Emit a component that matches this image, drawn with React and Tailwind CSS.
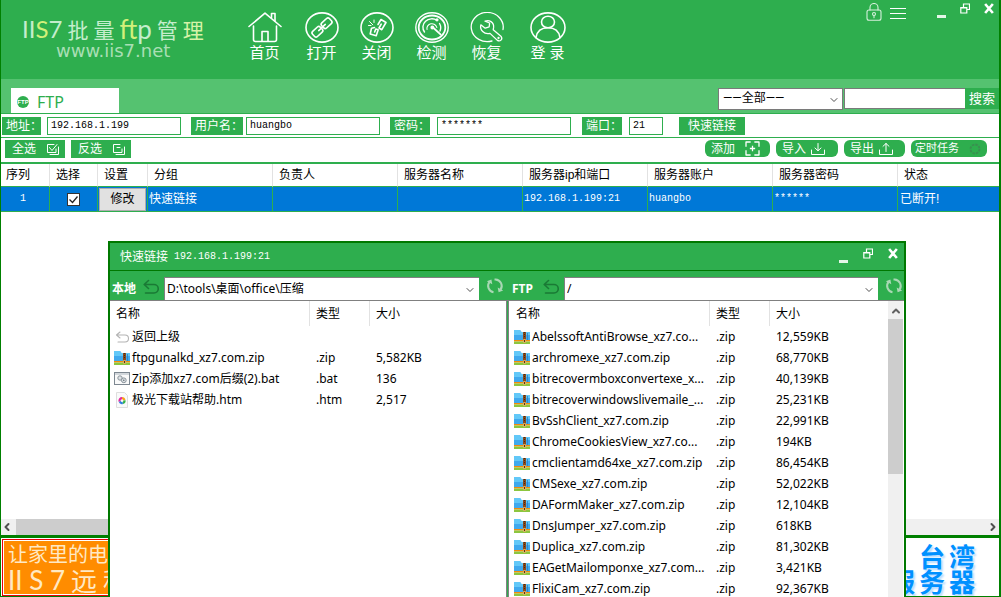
import React from "react";
import { ChevronDown, ChevronLeft, ChevronRight, ChevronUp } from "lucide-react";

const columns = [
  { label: "序列", width: 49 },
  { label: "选择", width: 48 },
  { label: "设置", width: 50 },
  { label: "分组", width: 125 },
  { label: "负责人", width: 125 },
  { label: "服务器名称", width: 125 },
  { label: "服务器ip和端口", width: 125 },
  { label: "服务器账户", width: 125 },
  { label: "服务器密码", width: 125 },
  { label: "状态" },
];

const localFiles = [
  { icon: "back", name: "返回上级", type: "", size: "" },
  { icon: "zip", name: "ftpgunalkd_xz7.com.zip", type: ".zip", size: "5,582KB" },
  { icon: "bat", name: "Zip添加xz7.com后缀(2).bat", type: ".bat", size: "136" },
  { icon: "htm", name: "极光下载站帮助.htm", type: ".htm", size: "2,517" },
];

const remoteFiles = [
  ["AbelssoftAntiBrowse_xz7.co...", "12,559KB"],
  ["archromexe_xz7.com.zip", "68,770KB"],
  ["bitrecovermboxconvertexe_x...", "40,139KB"],
  ["bitrecoverwindowslivemaile_...", "25,231KB"],
  ["BvSshClient_xz7.com.zip", "22,991KB"],
  ["ChromeCookiesView_xz7.co...", "194KB"],
  ["cmclientamd64xe_xz7.com.zip", "86,454KB"],
  ["CMSexe_xz7.com.zip", "52,022KB"],
  ["DAFormMaker_xz7.com.zip", "12,104KB"],
  ["DnsJumper_xz7.com.zip", "618KB"],
  ["Duplica_xz7.com.zip", "81,302KB"],
  ["EAGetMailomponxe_xz7.com...", "3,421KB"],
  ["FlixiCam_xz7.com.zip", "92,367KB"],
].map(([name, size]) => ({ icon: "zip", name, type: ".zip", size }));

function Line({ className = "", width = 34, height = 31, strokeWidth = 1.6, children }) {
  return (
    <svg
      className={`shrink-0 ${className}`}
      width={width}
      height={height}
      viewBox={`0 0 ${width} ${height}`}
      fill="none"
      stroke="currentColor"
      strokeWidth={strokeWidth}
      strokeLinecap="round"
      strokeLinejoin="round"
      aria-hidden="true"
    >
      {children}
    </svg>
  );
}

const HomeIcon = () => (
  <Line>
    <path d="M1 14.5 17 1.2 33 14.5" />
    <path d="M5.5 14v13.5a2 2 0 0 0 2 2h19a2 2 0 0 0 2-2V14M14 29V19.5h6V29M23.5 5.5V1.5h3.5V9" />
  </Line>
);

const LinkIcon = () => (
  <Line>
    <ellipse cx="17" cy="15.5" rx="16" ry="14.6" />
    <g transform="rotate(-43 17 15.5)">
      <rect x="5.5" y="12" width="10.5" height="7" rx="2" />
      <rect x="18" y="12" width="10.5" height="7" rx="2" />
      <path d="M12.5 15.5h9" />
    </g>
  </Line>
);

const UnlinkIcon = () => (
  <Line>
    <ellipse cx="17" cy="15.5" rx="16" ry="14.6" />
    <path d="m18 12.5 3-5 5 3-4.2 7.2-2.8-1.7 2.2-3.8" />
    <path d="m14.5 15.5-3 .8-1.3 5.7 6 1.8 2-6-2.4-.8-1.2 3" />
    <path d="M12.8 12.8 9.5 9.5M14 10.5V8M11 13.5H8.5" strokeWidth="1" />
  </Line>
);

const GaugeIcon = () => (
  <Line strokeWidth="1.4">
    <ellipse cx="17" cy="15.5" rx="16.2" ry="14.7" />
    <ellipse cx="17" cy="15.5" rx="13.3" ry="12" strokeWidth="1.8" />
    <path d="M9.5 20A9 8.4 0 0 1 22 8.3M24.5 11.5a9 8.4 0 0 1 .5 7.5" />
    <path d="M12 17.5a5 4.8 0 0 1 9.8-2" strokeWidth="1.1" />
    <path d="m18 15.5 7.5 6.8" strokeWidth="1.8" />
    <circle cx="17.3" cy="15.5" r="1.2" fill="currentColor" />
    <circle cx="22" cy="7.8" r="0.9" fill="currentColor" />
  </Line>
);

const WrenchIcon = () => (
  <Line strokeWidth="1.3">
    <path d="M22 29A16 14.6 0 1 1 33 17.5" />
    <path d="m10.8 12.8 4.4 3.4 4-1.4.4-3.8-4.6-1.8c4-1.8 9.2.8 8.6 6.2l-.4 2.4 8 6.8c1.8 2.8-1.2 5.4-3.8 3.8l-7.4-7c-6 1.4-10.4-3.4-9.2-8.6Z" />
    <circle cx="28.5" cy="26" r="0.5" />
  </Line>
);

const UserIcon = () => (
  <Line width={36}>
    <ellipse cx="18" cy="15.5" rx="17" ry="14.6" />
    <ellipse cx="18" cy="10" rx="6.5" ry="5.8" />
    <path d="M6 25.5c1-6 5.5-9.7 12-9.7s11 3.7 12 9.7" />
  </Line>
);

const nav = [
  { label: "首页", icon: <HomeIcon />, width: "w-[59px]" },
  { label: "打开", icon: <LinkIcon />, width: "w-[55px]" },
  { label: "关闭", icon: <UnlinkIcon />, width: "w-[55px]" },
  { label: "检测", icon: <GaugeIcon />, width: "w-[55px]" },
  { label: "恢复", icon: <WrenchIcon />, width: "w-[55px]" },
  { label: "登 录", icon: <UserIcon />, width: "w-[67px]" },
];

function UndoIcon({ className }) {
  return (
    <Line width={16} height={16} className={className}>
      <path d="M5.5 1.5 1.2 5.5l4.3 4M1.5 5.5H11a4 4 0 0 1 0 8.5H2.5" />
    </Line>
  );
}

// The small version used inside a file row
function RowUndoIcon() {
  return (
    <Line width={16} height={16} strokeWidth={1.1} className="text-[#b4b4b4]">
      <path d="M6 3 2.5 6 6 9M3 6h8a3.5 3.5 0 0 1 0 7H4" />
    </Line>
  );
}

function RefreshIcon() {
  return (
    <Line width={18} height={18} className="text-[#a9d8b4]" strokeWidth={2}>
      <path d="M7.5 15.3A6.6 6.6 0 0 1 3.5 4.8M8.5 2.4h1A6.6 6.6 0 0 1 14.5 12.8" strokeLinecap="butt" />
      <path d="M.8 4.2 5.4 2.6l.9 4.6zM17.2 13.6l-4.6 1.6-.9-4.6z" fill="currentColor" stroke="none" />
    </Line>
  );
}

function FileIcon({ kind }) {
  if (kind === "back") return <RowUndoIcon />;
  if (kind === "bat") {
    return (
      <svg width="16" height="16" viewBox="0 0 16 16" className="shrink-0" aria-hidden="true">
        <rect x="0.5" y="1.5" width="15" height="12" fill="#fafafa" stroke="#7d8791" />
        <path d="M1 3h14" stroke="#aab4bd" />
        <g fill="#dfe3e6" stroke="#8a949c">
          <circle cx="6" cy="7" r="2.2" />
          <circle cx="9.8" cy="9.3" r="2.4" />
        </g>
        <circle cx="9.8" cy="9.3" r="0.8" fill="#5d6870" />
      </svg>
    );
  }
  if (kind === "htm") {
    return (
      <svg width="16" height="16" viewBox="0 0 16 16" className="shrink-0" aria-hidden="true">
        <path d="M2.5.5h8l3 3v12h-11z" fill="#fafafa" stroke="#dedede" />
        <g fill="none" strokeWidth="2.2">
          <path d="M8 6.2a2.5 2.5 0 0 1 2.4 2" stroke="#f7a21b" />
          <path d="M10.5 8.3A2.5 2.5 0 0 1 8.7 11" stroke="#35b34a" />
          <path d="M8.7 11a2.5 2.5 0 0 1-3-1.6" stroke="#2f7de0" />
          <path d="M5.6 9.4A2.5 2.5 0 0 1 8 6.2" stroke="#e22aa0" />
        </g>
      </svg>
    );
  }
  return (
    <svg width="16" height="16" viewBox="0 0 16 16" className="shrink-0" aria-hidden="true">
      <path d="M0 1h6l1.5 2H16v8H0z" fill="#3fa9ee" />
      <path d="M0 1h6l1.5 2H16v3H0z" fill="#62c8f8" />
      <path d="M0 11h16v1.5H0z" fill="#f58a0b" />
      <path d="M0 12.5h16V15H0z" fill="#8cc63f" />
      <path d="M9 3h3v9H9z" fill="#8c4a1c" />
      <path d="M10.5 3v6" stroke="#3b2a20" strokeDasharray="1 1" />
      <path d="M9.5 10.5h2v3h-2z" fill="#5c3210" stroke="#f2c46c" strokeWidth="0.8" />
      <path d="M13.5 4v7" stroke="#2b7fc0" strokeWidth="0.8" />
    </svg>
  );
}

function WindowButtons({ gap }) {
  return (
    <div className={`flex items-start text-white ${gap}`}>
      <button aria-label="最小化" className="flex h-[15px] w-[9px] items-end">
        <span className="h-[3px] w-full bg-[#e4f6e8]" />
      </button>
      <button aria-label="还原">
        <Line width={10} height={11} strokeWidth={1.2}>
          <path d="M.8 4.5h6v5.5h-6zM.8 5h6M3.5 4V1h6v5.5H7" strokeLinecap="square" strokeLinejoin="miter" />
        </Line>
      </button>
      <button aria-label="关闭窗口">
        <Line width={10} height={11} strokeWidth={2.6}>
          <path d="m2 2 6 7M8 2 2 9" strokeLinecap="square" />
        </Line>
      </button>
    </div>
  );
}

function Field({ label, id, value, labelClass, inputClass }) {
  return (
    <>
      <label htmlFor={id} className={`h-[18px] shrink-0 overflow-hidden bg-[#2eae4e] pl-1 leading-[18px] whitespace-nowrap text-white ${labelClass}`}>
        {label}
      </label>
      <input
        id={id}
        defaultValue={value}
        className={`h-[18px] border border-[#2eae4e] bg-white px-[3px] font-['Liberation_Mono','Noto_Sans_CJK_SC',monospace] text-[10px] text-black outline-none ${inputClass}`}
      />
    </>
  );
}

function Combo({ label, value, className, selectClass }) {
  return (
    <div className={`relative ${className}`}>
      <select aria-label={label} className={`block w-full appearance-none bg-white text-black outline-none ${selectClass}`}>
        <option>{value}</option>
      </select>
      <ChevronDown size={12} strokeWidth={2} className="pointer-events-none absolute top-1/2 right-[3px] -mt-[5px] text-[#505050]" />
    </div>
  );
}

function FilePane({ files }) {
  return (
    <table className="w-full table-fixed border-separate border-spacing-0 text-left whitespace-nowrap text-black">
      <colgroup>
        <col className="w-[200px]" />
        <col className="w-[60px]" />
        <col />
      </colgroup>
      <thead>
        <tr className="h-[25px]">
          <th className="border-r border-[#e2e2e2] p-0 pl-1.5 font-normal">名称</th>
          <th className="border-r border-[#e2e2e2] p-0 pl-1.5 font-normal">类型</th>
          <th className="p-0 pl-1.5 font-normal">大小</th>
        </tr>
      </thead>
      <tbody>
        {files.map((file) => (
          <tr key={file.name} className="h-[21px]">
            <td className="p-0 pl-1">
              <div className="flex h-[21px] items-center gap-[2px]">
                <FileIcon kind={file.icon} />
                <span>{file.name}</span>
              </div>
            </td>
            <td className="p-0 pl-1.5">{file.type}</td>
            <td className="p-0 pl-1.5">{file.size}</td>
          </tr>
        ))}
      </tbody>
    </table>
  );
}

function FtpWindow() {
  return (
    <section className="absolute top-[241px] right-[93px] bottom-0 left-[107px] flex flex-col overflow-hidden border-2 border-b-0 border-[#007800] bg-white">
      <div className="flex h-7 shrink-0 items-start justify-between border-b border-[#007800] bg-[#2eae4e] pr-[6px] pl-[10px] text-white">
        <h2 className="flex items-center gap-1.5 leading-[28px]">
          快速链接 <span className="font-['Liberation_Mono',monospace] text-[10px]">192.168.1.199:21</span>
        </h2>
        <div className="pt-[5px]">
          <WindowButtons gap="gap-[15px]" />
        </div>
      </div>

      <div className="flex min-h-0 flex-1 font-['Noto_Sans','Noto_Sans_CJK_SC',sans-serif]">
        <div className="flex w-1/2 flex-col">
          <div className="flex h-[30px] shrink-0 items-end border-b border-[#808080] bg-[#2eae4e]">
            <span className="w-8 pb-[3px] pl-[2px] font-bold text-white">本地</span>
            <button aria-label="本地上级目录" className="mb-[5px] ml-[1px] text-[#1a7a35]">
              <UndoIcon />
            </button>
            <Combo
              label="本地路径"
              value="D:\tools\桌面\office\压缩"
              className="ml-[5px] flex-1"
              selectClass="h-[23px] border-t border-l border-[#808080] pl-[2px]"
            />
            <button aria-label="刷新本地" className="mr-[3px] mb-[5px] ml-[7px]">
              <RefreshIcon />
            </button>
          </div>
          <div className="flex-1 border-r border-[#808080]">
            <FilePane files={localFiles} />
          </div>
        </div>

        <div className="flex w-1/2 flex-col">
          <div className="flex h-[30px] shrink-0 items-end border-b border-[#808080] bg-[#2eae4e]">
            <span className="w-8 pb-[3px] pl-[5px] font-bold text-white">FTP</span>
            <button aria-label="远程上级目录" className="mb-[5px] ml-[4px] text-[#1a7a35]">
              <UndoIcon />
            </button>
            <Combo
              label="远程路径"
              value="/"
              className="ml-[5px] flex-1"
              selectClass="h-[23px] border-t border-l border-[#808080] pl-[2px]"
            />
            <button aria-label="刷新远程" className="mr-[1px] mb-[5px] ml-[7px]">
              <RefreshIcon />
            </button>
          </div>
          <div className="flex min-h-0 flex-1 border-l border-[#2eae4e]">
            <div className="min-w-0 flex-1 border-l border-[#808080] pl-[1px]">
              <FilePane files={remoteFiles} />
            </div>
            <div className="mr-[1px] flex w-[15px] shrink-0 flex-col items-center bg-[#f0f0f0] pt-1">
              <ChevronUp size={12} strokeWidth={4} className="shrink-0 text-[#606060]" />
              <div className="mt-[2px] h-[155px] w-full bg-[#cdcdcd]" />
            </div>
          </div>
        </div>
      </div>
    </section>
  );
}

export default function App() {
  return (
    <div className="relative flex h-screen flex-col overflow-hidden border-r-2 border-l border-[#008000] bg-white font-['Liberation_Sans','Noto_Sans_CJK_SC',sans-serif] text-xs">
      <header className="flex h-[79px] shrink-0 items-start bg-[#2eae4e] text-white">
        <div className="w-[234px] shrink-0 pt-[15px] pl-[21px]">
          <div className="flex items-center gap-[5px] font-['Noto_Sans_CJK_SC',sans-serif] text-[21px] leading-[28px] text-[#c4edcc]">
            <span className="font-['Lato',sans-serif] text-[24px]">
              II<span className="text-[#d2f07a]">S</span>7
            </span>
            <span>批</span>
            <span>量</span>
            <span className="font-['Lato',sans-serif] text-[26px] text-[#d2f07a]">
              ft<span className="text-[#c4edcc]">p</span>
            </span>
            <span>管</span>
            <span className="text-[#d6f3a8]">理</span>
          </div>
          <div className="pl-[34px] font-['DejaVu_Sans',sans-serif] text-[18px] leading-[15px] text-[#a9dfb5]">www.iis7.net</div>
        </div>
        <nav className="flex pt-3">
          {nav.map((item) => (
            <button key={item.label} className={`flex flex-col items-center ${item.width}`}>
              {item.icon}
              <span className="text-[15px] leading-5 whitespace-nowrap">{item.label}</span>
            </button>
          ))}
        </nav>
        <div className="ml-auto flex items-start pt-[3px] pr-[5px]">
          <button aria-label="锁定">
            <Line width={16} height={18} strokeWidth={1.1} className="text-[#d6f0dc]">
              <rect x="1" y="7" width="14" height="10.3" rx="2" />
              <path d="M4 7V4.5a4 4 0 0 1 8 0V7M8 12.5v2.3" />
              <circle cx="8" cy="11" r="1.5" />
            </Line>
          </button>
          <button aria-label="菜单" className="mt-[5px] ml-2 flex w-4 flex-col gap-1">
            <span className="h-[1px] w-full bg-white" />
            <span className="h-[1px] w-full bg-white" />
            <span className="h-[1px] w-full bg-white" />
          </button>
          <div className="ml-[31px]">
            <WindowButtons gap="gap-[14px]" />
          </div>
        </div>
      </header>

      <div className="flex h-[35px] shrink-0 items-start border-b border-[#2eae4e] bg-[#55c270] pt-[9px] pl-[10px]">
        <button className="flex h-[25px] w-[108px] items-center gap-2 bg-white pt-[2px] pl-[6px] text-[#2eae4e]">
          <span className="flex h-3 w-3 items-center justify-center rounded-full bg-[#2eae4e] text-[6px] leading-none font-bold text-white">FTP</span>
          <span className="font-['Noto_Sans',sans-serif] text-base">FTP</span>
        </button>
        <div className="ml-auto flex items-start">
          <Combo
            label="分组筛选"
            value="——全部——"
            className="w-[125px]"
            selectClass="h-[22px] border border-[#7a7a7a] pb-[3px] pl-1 font-['Roboto','Noto_Sans_CJK_SC',sans-serif]"
          />
          <input aria-label="搜索内容" className="ml-[1px] h-[21px] w-[121px] border border-r-0 border-[#7a7a7a] bg-white px-1 outline-none" />
          <button className="h-[21px] w-[34px] bg-[#2eae4e] text-[13px] text-white">搜索</button>
        </div>
      </div>

      <form className="flex h-6 shrink-0 items-center border-b border-[#2eae4e]">
        <Field id="host" label="地址：" value="192.168.1.199" labelClass="ml-[1px] w-[39px]" inputClass="ml-1.5 w-[134px]" />
        <Field id="user" label="用户名：" value="huangbo" labelClass="ml-[10px] w-[52px]" inputClass="ml-[3px] w-[134px]" />
        <Field id="password" label="密码：" value="*******" labelClass="ml-[10px] w-10" inputClass="ml-[7px] w-[134px]" />
        <Field id="port" label="端口：" value="21" labelClass="ml-[11px] w-10" inputClass="ml-[7px] w-[34px]" />
        <button type="button" className="ml-4 h-[18px] w-[66px] bg-[#2eae4e] text-white">
          快速链接
        </button>
      </form>

      <div className="flex h-[26px] shrink-0 items-start gap-1.5 border-b-2 border-[#2eae4e] pt-[2px] pr-3 pl-1 text-white">
        <button className="flex h-[18px] w-[60px] items-center justify-between bg-[#2eae4e] pr-[5px] pl-[7px]">
          全选
          <Line width={14} height={13} strokeWidth={1}>
            <path d="M8 1.5H1.5v8H10V6M3.5 4.5l2.5 3 5-6M12.5 4v7.5H4" />
          </Line>
        </button>
        <button className="flex h-[18px] w-[60px] items-center justify-between bg-[#2eae4e] pr-[5px] pl-[7px]">
          反选
          <Line width={14} height={13} strokeWidth={1}>
            <path d="M8 1.5H1.5v8H10V6M5 4.5h3M12.5 4v7.5H4" />
          </Line>
        </button>
        <button className="ml-auto flex h-[17px] w-[65px] items-center justify-between rounded-md bg-[#2eae4e] pr-[10px] pl-1.5">
          添加
          <Line width={15} height={15} strokeWidth={1.3}>
            <path d="M5 1H1v4M10 1h4v4M1 10v4h4M14 10v4h-4M7.5 5.5v4M5.5 7.5h4" strokeLinecap="square" />
          </Line>
        </button>
        <button className="flex h-[17px] w-[62px] items-center justify-between rounded-md bg-[#2eae4e] pr-[13px] pl-1.5">
          导入
          <Line width={14} height={14} strokeWidth={1}>
            <path d="M.5 8v4.5h13V8M7 1.5v7M4 6l3 2.8L10 6" />
          </Line>
        </button>
        <button className="flex h-[17px] w-[61px] items-center justify-between rounded-md bg-[#2eae4e] pr-3 pl-1.5">
          导出
          <Line width={14} height={14} strokeWidth={1}>
            <path d="M.5 8v4.5h13V8M7 9.5V1.5M4 4.3l3-2.8 3 2.8" />
          </Line>
        </button>
        <button className="flex h-[17px] w-[76px] items-center justify-between rounded-md bg-[#2eae4e] pr-1.5 pl-1 text-[11px]">
          定时任务
          <Line width={12} height={12} strokeWidth={1.8} className="text-[#3a8f50]">
            <circle cx="6" cy="6" r="4.5" strokeDasharray="2.5 1" strokeLinecap="butt" />
          </Line>
        </button>
      </div>

      <main className="min-h-0 flex-1 overflow-hidden">
        <table className="w-full table-fixed border-separate border-spacing-0 text-left whitespace-nowrap">
          <colgroup>
            {columns.map((column) => (
              <col key={column.label} style={{ width: column.width }} />
            ))}
          </colgroup>
          <thead>
            <tr className="h-[23px]">
              {columns.map((column) => (
                <th key={column.label} className="border-r border-b border-r-[#e2e2e2] border-b-[#2eae4e] p-0 pl-1.5 font-normal first:pl-[5px] last:border-r-0">
                  {column.label}
                </th>
              ))}
            </tr>
          </thead>
          <tbody>
            <tr className="h-[25px] bg-[#0078d7] text-white [&>td]:border-r [&>td]:border-b [&>td]:border-[#2eae4e]">
              <td className="p-0 pr-1 text-center font-['Liberation_Mono',monospace] text-[10px]">1</td>
              <td className="p-0">
                <label className="flex justify-center">
                  <input type="checkbox" aria-label="选择" defaultChecked className="peer sr-only" />
                  <svg width="13" height="13" viewBox="0 0 13 13" aria-hidden="true">
                    <rect x="0.5" y="0.5" width="12" height="12" fill="#fff" stroke="#333" />
                    <path d="m2.5 6.5 3 3 5-6" fill="none" stroke="#222" strokeWidth="1.3" />
                  </svg>
                </label>
              </td>
              <td className="p-0">
                <button className="mx-auto block h-[23px] w-[47px] border border-[#adadad] bg-[#e1e1e1] text-black">修改</button>
              </td>
              <td className="p-0 pl-[1px]">快速链接</td>
              <td className="p-0" />
              <td className="p-0" />
              <td className="p-0 pl-[1px] font-['Liberation_Mono',monospace] text-[10px]">192.168.1.199:21</td>
              <td className="p-0 pl-[1px] font-['Liberation_Mono',monospace] text-[10px]">huangbo</td>
              <td className="p-0 pl-[1px] font-['Liberation_Mono',monospace] text-[10px]">******</td>
              <td className="border-r-0! p-0 pl-[2px]">已断开!</td>
            </tr>
          </tbody>
        </table>
      </main>

      <div className="flex h-4 shrink-0 items-center bg-[#f0f0f0] text-[#505050]">
        <ChevronLeft size={12} strokeWidth={4} />
        <div className="ml-[3px] h-full w-3/5 bg-[#cdcdcd]" />
        <ChevronRight size={12} strokeWidth={4} className="ml-auto" />
      </div>

      <footer className="flex h-[62px] shrink-0 items-start justify-between overflow-hidden border-t-[3px] border-b border-[#008000]">
        <a href="#remote" className="mt-[1px] ml-[1px] block h-[57px] w-[480px] border border-red-600 p-[1px]">
          <div className="flex h-full flex-col bg-[#ff8c00] pl-1 font-['Noto_Sans_CJK_SC',sans-serif] whitespace-nowrap text-[#ffe9c4]">
            <span className="text-xl leading-[26px]">让家里的电脑</span>
            <span className="flex items-center gap-1.5 text-[26px] leading-[26px]">
              <span className="font-['Lato',sans-serif] text-[26px]">II S 7</span>
              <span>远</span>
              <span>程</span>
            </span>
          </div>
        </a>
        <a
          href="#server"
          className="mt-[5px] mr-6 flex flex-col items-end font-['Noto_Sans_CJK_SC',sans-serif] text-[26px] leading-[25px] font-bold text-[#0090ff] [text-shadow:2px_2px_2px_#b8dcff]"
        >
          <span className="flex gap-1">
            <span>台</span>
            <span>湾</span>
          </span>
          <span className="flex gap-1">
            <span>服</span>
            <span>务</span>
            <span>器</span>
          </span>
        </a>
      </footer>

      <FtpWindow />
    </div>
  );
}
